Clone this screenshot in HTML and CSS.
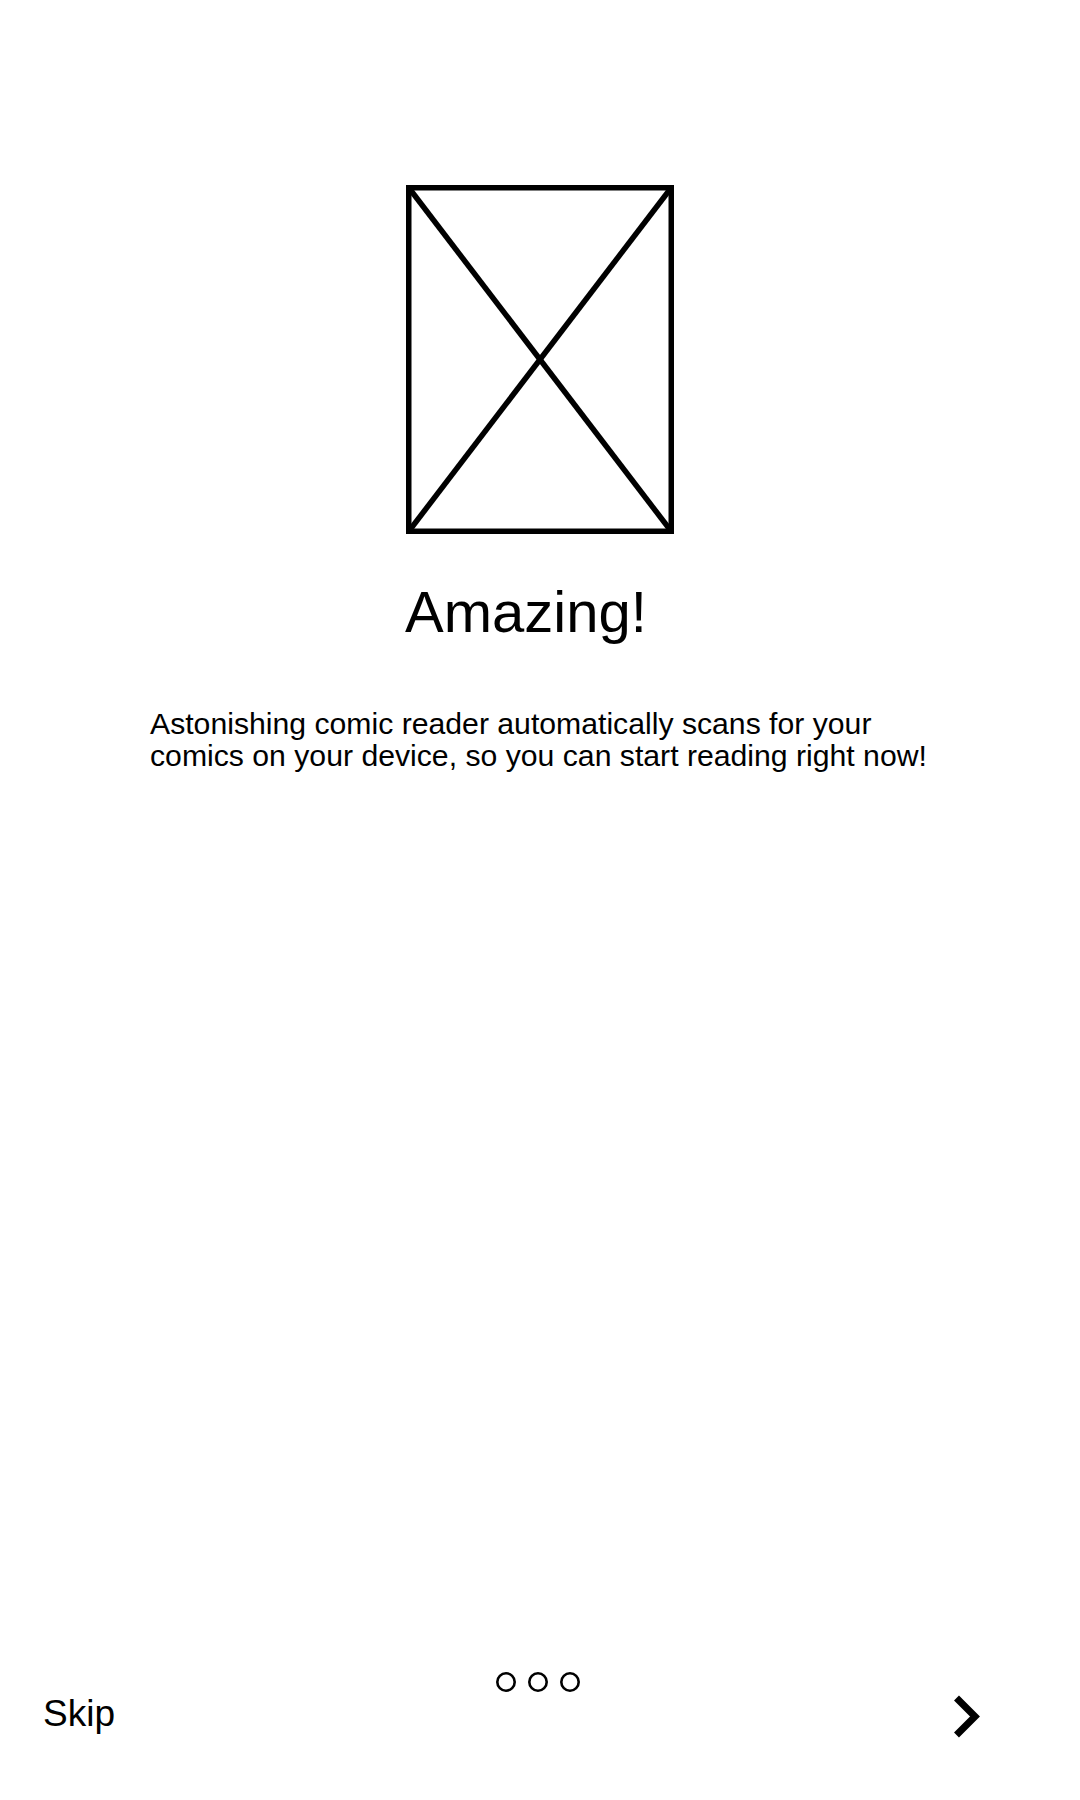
FILE: index.html
```html
<!DOCTYPE html>
<html lang="en">
<head>
<meta charset="utf-8">
<title>Amazing!</title>
<link rel="stylesheet" href="styles.css">
</head>
<body>
<div class="screen">
  <main class="content">
    <svg class="placeholder" width="268" height="349" viewBox="0 0 268 349" aria-hidden="true">
      <rect x="2.75" y="2.75" width="262.5" height="343.5" fill="none" stroke="#000" stroke-width="5.5"/>
      <line x1="3" y1="3" x2="265" y2="346" stroke="#000" stroke-width="5.5"/>
      <line x1="265" y1="3" x2="3" y2="346" stroke="#000" stroke-width="5.5"/>
    </svg>
    <h1 class="title">Amazing!</h1>
    <p class="desc">Astonishing comic reader automatically scans for your comics on your device, so you can start reading right now!</p>
  </main>
  <footer class="footer">
    <span class="skip">Skip</span>
    <div class="dots">
      <svg class="dot" width="22" height="22" viewBox="0 0 22 22"><circle cx="11" cy="11" r="8.7" fill="none" stroke="#000" stroke-width="2.6"/></svg>
      <svg class="dot" width="22" height="22" viewBox="0 0 22 22"><circle cx="11" cy="11" r="8.7" fill="none" stroke="#000" stroke-width="2.6"/></svg>
      <svg class="dot" width="22" height="22" viewBox="0 0 22 22"><circle cx="11" cy="11" r="8.7" fill="none" stroke="#000" stroke-width="2.6"/></svg>
    </div>
    <svg class="next" width="30" height="46" viewBox="0 0 30 46" aria-hidden="true">
      <path d="M3.5 4 L22 22.5 L3.5 41" fill="none" stroke="#000" stroke-width="7"/>
    </svg>
  </footer>
</div>
</body>
</html>
```

FILE: styles.css
```css
html, body {
  margin: 0;
  padding: 0;
  background: #fff;
}

.screen {
  width: 1080px;
  height: 1800px;
  display: flex;
  flex-direction: column;
  font-family: "Liberation Sans", Arial, sans-serif;
  color: #000;
}

.content {
  flex: 1;
  display: flex;
  flex-direction: column;
  align-items: center;
  padding-top: 185px;
}

.placeholder {
  display: block;
}

.title {
  margin: 46px 0 0 0;
  font-size: 58px;
  line-height: 64px;
  font-weight: normal;
  padding-right: 28px;
}

.desc {
  margin: 64px 0 0 0;
  width: 780px;
  font-size: 30.2px;
  line-height: 32px;
}

.footer {
  height: 100px;
  padding: 0 43px 40px 43px;
  display: grid;
  grid-template-columns: 1fr auto 1fr;
  align-items: start;
}

.skip {
  justify-self: start;
  margin-top: 34px;
  font-size: 37px;
  line-height: 40px;
}

.dots {
  display: flex;
  gap: 10px;
  margin-top: 11px;
  margin-right: 5px;
}

.dot {
  display: block;
}

.next {
  justify-self: end;
  margin-top: 34px;
  margin-right: 54px;
  display: block;
}
```
